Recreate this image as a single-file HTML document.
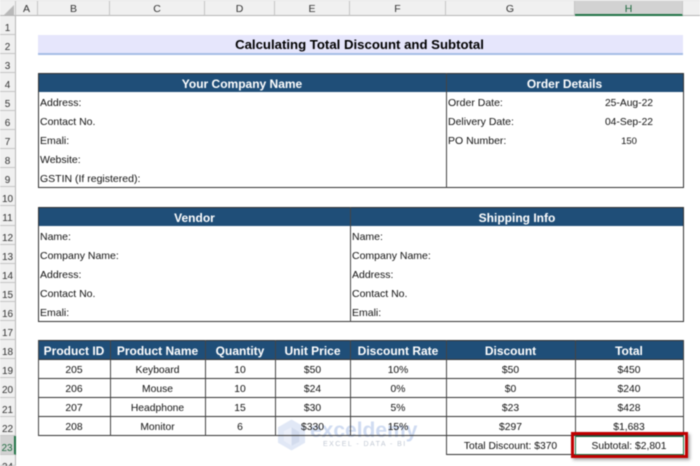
<!DOCTYPE html>
<html><head><meta charset="utf-8">
<style>
html,body{margin:0;padding:0;background:#fff}
#p{position:relative;width:700px;height:466px;overflow:hidden;background:#fff;font-family:"Liberation Sans",sans-serif;color:#111;filter:blur(.4px)}
#p div{position:absolute;box-sizing:border-box;white-space:nowrap}
.ch{top:1px;height:15px;background:#f0f0f0;border-right:1px solid #c6c6c6;border-bottom:1px solid #b5b5b5;font-size:10.5px;line-height:17px;text-align:center;color:#333}
.rh{left:0;width:16px;background:#f0f0f0;border-bottom:1px solid #c6c6c6;border-right:1px solid #b5b5b5;font-size:10px;text-align:center;color:#333;line-height:26px!important}
.b{background:#1f4e78;color:#fff;font-weight:bold;font-size:12px;text-align:center;line-height:22px;height:19px}
.l{font-size:10.5px;line-height:23px;height:19px}
.c{font-size:10.3px;line-height:23px;height:19px;text-align:center}
.hl{background:#333;height:1px}
.vl{background:#444;width:1px}
</style></head><body><div id="p">
<div style="left:0;top:0;width:700px;height:1px;background:#e6e6e6"></div>
<div style="left:0;top:1px;width:16px;height:15px;background:#f0f0f0;border-right:1px solid #c6c6c6;border-bottom:1px solid #b5b5b5"></div>
<svg style="position:absolute;left:4px;top:5px" width="10" height="10"><path d="M10 0V10H0Z" fill="#b9b9b9"/></svg>
<div class="ch" style="left:16px;width:22px">A</div>
<div class="ch" style="left:38px;width:72px">B</div>
<div class="ch" style="left:110px;width:95px">C</div>
<div class="ch" style="left:205px;width:70px">D</div>
<div class="ch" style="left:275px;width:75px">E</div>
<div class="ch" style="left:350px;width:96px">F</div>
<div class="ch" style="left:446px;width:129px">G</div>
<div class="ch" style="left:575px;width:108px;background:#d2d2d2;border-bottom:2px solid #217346;color:#1f6b40">H</div>
<div class="ch" style="left:683px;width:17px;border-right:0"></div>

<div class="rh" style="top:16px;height:19px">1</div>
<div class="rh" style="top:35px;height:19px">2</div>
<div class="rh" style="top:54px;height:19px">3</div>
<div class="rh" style="top:73px;height:19px">4</div>
<div class="rh" style="top:92px;height:19px">5</div>
<div class="rh" style="top:111px;height:19px">6</div>
<div class="rh" style="top:130px;height:19px">7</div>
<div class="rh" style="top:149px;height:19px">8</div>
<div class="rh" style="top:168px;height:19px">9</div>
<div class="rh" style="top:187px;height:19px">10</div>
<div class="rh" style="top:206px;height:20px">11</div>
<div class="rh" style="top:226px;height:19px">12</div>
<div class="rh" style="top:245px;height:19px">13</div>
<div class="rh" style="top:264px;height:19px">14</div>
<div class="rh" style="top:283px;height:19px">15</div>
<div class="rh" style="top:302px;height:19px">16</div>
<div class="rh" style="top:321px;height:19px">17</div>
<div class="rh" style="top:340px;height:19px">18</div>
<div class="rh" style="top:359px;height:19px">19</div>
<div class="rh" style="top:378px;height:20px">20</div>
<div class="rh" style="top:398px;height:19px">21</div>
<div class="rh" style="top:417px;height:19px">22</div>
<div class="rh" style="top:436px;height:19px;background:#d2d2d2;border-right:2px solid #217346;color:#1f6b40">23</div>
<div class="rh" style="top:455px;height:11px">24</div>

<div style="left:38px;top:35px;width:645px;height:20px;background:#e6e6fc;border-bottom:2px solid #a6bde6"></div>
<div style="left:38px;top:35px;width:645px;height:18px;line-height:19px;text-align:center;font-size:13.2px;font-weight:bold;color:#000;padding-right:2px">Calculating Total Discount and Subtotal</div>

<!-- Company block -->
<div class="b" style="left:38px;top:73px;width:408px">Your Company Name</div>
<div class="b" style="left:446px;top:73px;width:237px">Order Details</div>
<div class="l" style="left:40px;top:92px">Address:</div>
<div class="l" style="left:40px;top:111px">Contact No.</div>
<div class="l" style="left:40px;top:130px">Emali:</div>
<div class="l" style="left:40px;top:149px">Website:</div>
<div class="l" style="left:40px;top:168px">GSTIN (If registered):</div>
<div class="l" style="left:448px;top:92px">Order Date:</div>
<div class="l" style="left:448px;top:111px">Delivery Date:</div>
<div class="l" style="left:448px;top:130px">PO Number:</div>
<div class="c" style="left:575px;top:92px;width:108px">25-Aug-22</div>
<div class="c" style="left:575px;top:111px;width:108px">04-Sep-22</div>
<div class="c" style="left:575px;top:130px;width:108px;font-size:9.5px">150</div>
<div style="left:38px;top:73px;width:646px;height:115px;border:1px solid #333"></div>
<div class="vl" style="left:446px;top:73px;height:115px"></div>

<!-- Vendor block -->
<div class="b" style="left:38px;top:207px;width:313px">Vendor</div>
<div class="b" style="left:351px;top:207px;width:332px">Shipping Info</div>
<div class="l" style="left:40px;top:226px">Name:</div>
<div class="l" style="left:40px;top:245px">Company Name:</div>
<div class="l" style="left:40px;top:264px">Address:</div>
<div class="l" style="left:40px;top:283px">Contact No.</div>
<div class="l" style="left:40px;top:302px">Emali:</div>
<div class="l" style="left:352px;top:226px">Name:</div>
<div class="l" style="left:352px;top:245px">Company Name:</div>
<div class="l" style="left:352px;top:264px">Address:</div>
<div class="l" style="left:352px;top:283px">Contact No.</div>
<div class="l" style="left:352px;top:302px">Emali:</div>
<div style="left:38px;top:207px;width:646px;height:115px;border:1px solid #333"></div>
<div class="vl" style="left:350px;top:207px;height:115px"></div>

<!-- Watermark -->
<svg style="position:absolute;left:278px;top:419px;opacity:.55" width="29" height="32" viewBox="0 0 30 32"><path d="M14 0L28 8V24L14 32L0 24V8Z" fill="#c9d6f0"/><path d="M14 8L22 13V23L14 27Z" fill="#aebfdf"/><path d="M6 12L14 8V27L6 22Z" fill="#dbe3f5"/></svg>
<div style="left:310px;top:419px;font-size:21px;font-weight:bold;line-height:24px;color:#bcccec;opacity:.7">exceldemy</div>
<div style="left:323px;top:440px;font-size:7px;line-height:10px;letter-spacing:1.45px;color:#c2c9d4">EXCEL - DATA - BI</div>

<!-- Product table -->
<div class="b" style="left:38px;top:340px;width:72px">Product ID</div>
<div class="b" style="left:110px;top:340px;width:95px">Product Name</div>
<div class="b" style="left:205px;top:340px;width:70px">Quantity</div>
<div class="b" style="left:275px;top:340px;width:75px">Unit Price</div>
<div class="b" style="left:350px;top:340px;width:96px">Discount Rate</div>
<div class="b" style="left:446px;top:340px;width:129px">Discount</div>
<div class="b" style="left:575px;top:340px;width:108px">Total</div>

<div class="c" style="left:38px;top:359px;width:72px">205</div>
<div class="c" style="left:110px;top:359px;width:95px">Keyboard</div>
<div class="c" style="left:205px;top:359px;width:70px">10</div>
<div class="c" style="left:275px;top:359px;width:75px">$50</div>
<div class="c" style="left:350px;top:359px;width:96px">10%</div>
<div class="c" style="left:446px;top:359px;width:129px">$50</div>
<div class="c" style="left:575px;top:359px;width:108px">$450</div>

<div class="c" style="left:38px;top:378px;width:72px">206</div>
<div class="c" style="left:110px;top:378px;width:95px">Mouse</div>
<div class="c" style="left:205px;top:378px;width:70px">10</div>
<div class="c" style="left:275px;top:378px;width:75px">$24</div>
<div class="c" style="left:350px;top:378px;width:96px">0%</div>
<div class="c" style="left:446px;top:378px;width:129px">$0</div>
<div class="c" style="left:575px;top:378px;width:108px">$240</div>

<div class="c" style="left:38px;top:397px;width:72px">207</div>
<div class="c" style="left:110px;top:397px;width:95px">Headphone</div>
<div class="c" style="left:205px;top:397px;width:70px">15</div>
<div class="c" style="left:275px;top:397px;width:75px">$30</div>
<div class="c" style="left:350px;top:397px;width:96px">5%</div>
<div class="c" style="left:446px;top:397px;width:129px">$23</div>
<div class="c" style="left:575px;top:397px;width:108px">$428</div>

<div class="c" style="left:38px;top:416px;width:72px">208</div>
<div class="c" style="left:110px;top:416px;width:95px">Monitor</div>
<div class="c" style="left:205px;top:416px;width:70px">6</div>
<div class="c" style="left:275px;top:416px;width:75px">$330</div>
<div class="c" style="left:350px;top:416px;width:96px">15%</div>
<div class="c" style="left:446px;top:416px;width:129px">$297</div>
<div class="c" style="left:575px;top:416px;width:108px">$1,683</div>

<div class="c" style="left:446px;top:435px;width:129px">Total Discount: $370</div>
<div class="c" style="left:575px;top:435px;width:108px">Subtotal: $2,801</div>

<div class="hl" style="left:38px;top:340px;width:646px"></div>
<div class="hl" style="left:38px;top:359px;width:646px"></div>
<div class="hl" style="left:38px;top:378px;width:646px"></div>
<div class="hl" style="left:38px;top:397px;width:646px"></div>
<div class="hl" style="left:38px;top:416px;width:646px"></div>
<div class="hl" style="left:38px;top:435px;width:646px"></div>
<div class="hl" style="left:446px;top:454px;width:129px"></div>
<div class="vl" style="left:38px;top:340px;height:96px"></div>
<div class="vl" style="left:110px;top:340px;height:96px"></div>
<div class="vl" style="left:205px;top:340px;height:96px"></div>
<div class="vl" style="left:275px;top:340px;height:96px"></div>
<div class="vl" style="left:350px;top:340px;height:96px"></div>
<div class="vl" style="left:446px;top:340px;height:115px"></div>
<div class="vl" style="left:575px;top:340px;height:96px"></div>
<div class="vl" style="left:683px;top:340px;height:96px"></div>

<!-- Selection and red box -->
<div style="left:575px;top:436px;width:109px;height:19px;border:1px solid #217346"></div>
<div style="left:571px;top:432px;width:117px;height:26px;border:3px solid #c00000;box-shadow:2px 2px 3px rgba(0,0,0,.35)"></div>
</div></body></html>
